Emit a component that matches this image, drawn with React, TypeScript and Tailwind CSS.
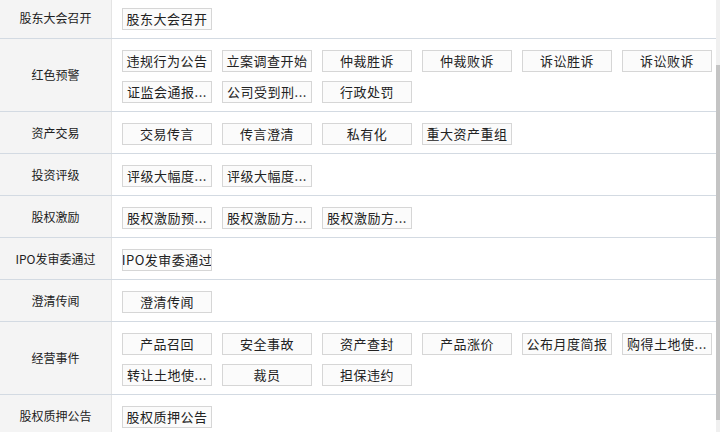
const rows: { label: string; items: string[] }[] = [
  { label: "股东大会召开", items: ["股东大会召开"] },
  {
    label: "红色预警",
    items: ["违规行为公告", "立案调查开始", "仲裁胜诉", "仲裁败诉", "诉讼胜诉", "诉讼败诉", "证监会通报...", "公司受到刑...", "行政处罚"],
  },
  { label: "资产交易", items: ["交易传言", "传言澄清", "私有化", "重大资产重组"] },
  { label: "投资评级", items: ["评级大幅度...", "评级大幅度..."] },
  { label: "股权激励", items: ["股权激励预...", "股权激励方...", "股权激励方..."] },
  { label: "IPO发审委通过", items: ["IPO发审委通过"] },
  { label: "澄清传闻", items: ["澄清传闻"] },
  {
    label: "经营事件",
    items: ["产品召回", "安全事故", "资产查封", "产品涨价", "公布月度简报", "购得土地使...", "转让土地使...", "裁员", "担保违约"],
  },
  { label: "股权质押公告", items: ["股权质押公告"] },
];

function Tag({ text }: { text: string }) {
  return (
    <div className="w-[90px] h-[22px] flex items-center justify-center border border-[#d6d6d6] bg-[#fbfbfb] text-[13px] text-[#222] whitespace-nowrap overflow-hidden tracking-[0.5px]">
      {text}
    </div>
  );
}

export default function App() {
  return (
    <div
      className="w-[720px] h-[432px] overflow-hidden bg-white flex"
      style={{ fontFamily: '"Noto Sans CJK SC", "Liberation Sans", sans-serif' }}
    >
      <div className="w-[716px] -mt-[3px]">
        {rows.map((row) => (
          <div key={row.label} className="flex border-b border-[#d3dae2]">
            <div className="w-[112px] shrink-0 bg-[#f4f4f4] border-r border-[#e4e4e4] flex items-center justify-center text-[12px] text-[#222]">
              {row.label}
            </div>
            <div className="flex-1 pl-[10px] pt-[11px] pb-[8px] flex flex-wrap gap-x-[10px] gap-y-[9px]">
              {row.items.map((item, i) => (
                <Tag key={i} text={item} />
              ))}
            </div>
          </div>
        ))}
      </div>
      <div className="w-[4px] bg-[#f0f0f0] flex flex-col">
        <div className="h-[65px]" />
        <div className="h-[355px] bg-[#c4c4c4]" />
      </div>
    </div>
  );
}
